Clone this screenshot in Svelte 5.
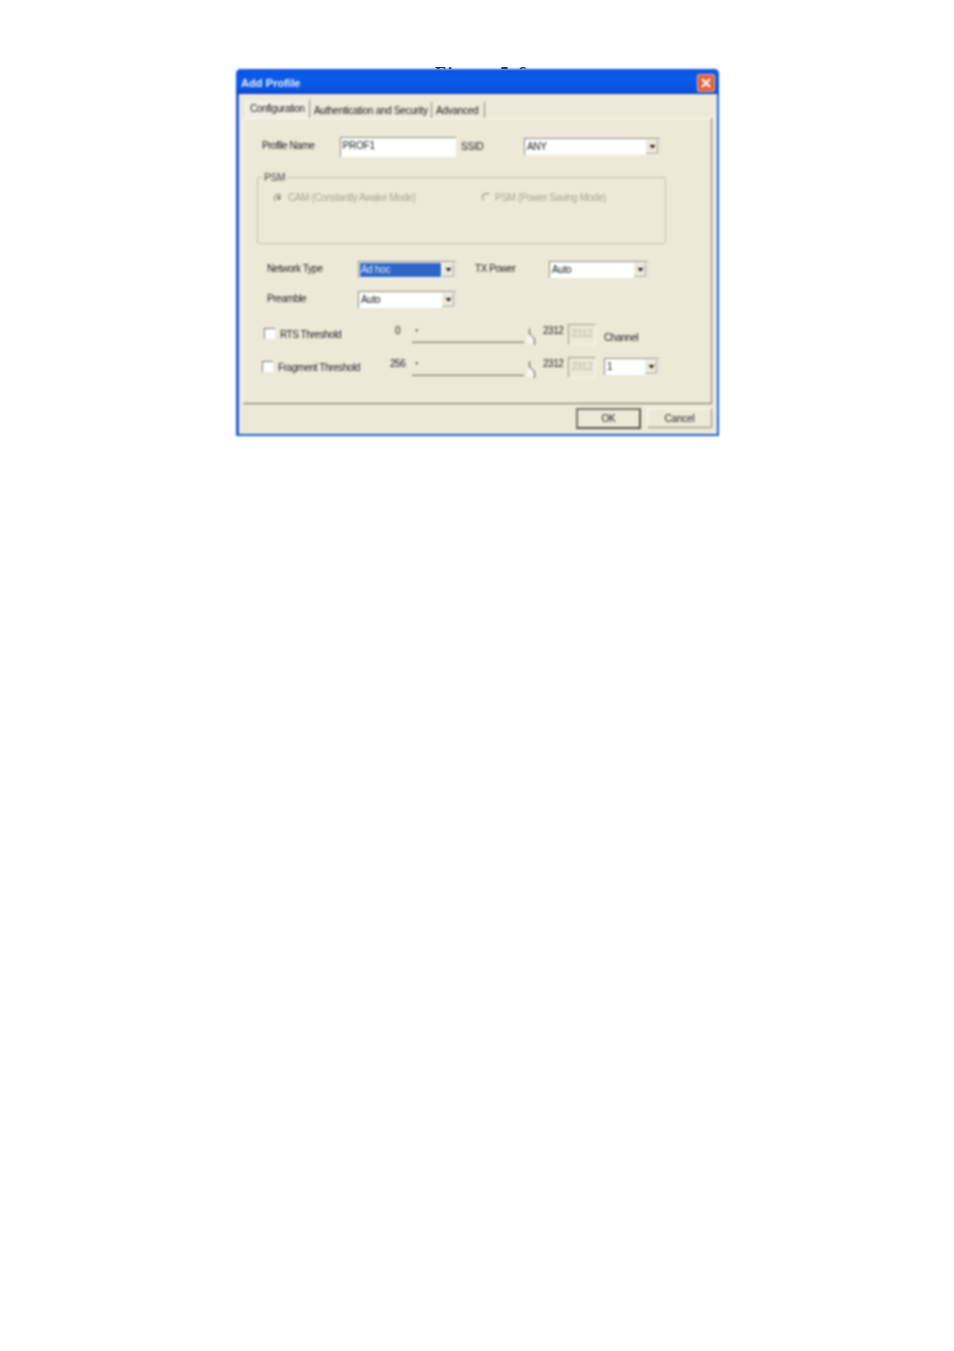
{#snippet select(text, cls, sel)}
  <div class="select {cls}">
    <span class="val" class:sel>{text}</span>
    <span class="arrow"><svg width="7" height="4" viewBox="0 0 7 4"><path d="M0.5 0H6.5L3.5 3.6Z" fill="#111"/></svg></span>
  </div>
{/snippet}

{#snippet sliderBar()}
  <svg class="slider" width="124" height="22" viewBox="0 0 124 22">
    <rect x="4" y="5" width="1.4" height="2.5" fill="#444"/>
    <path d="M0 18.5H112" stroke="#77756a" stroke-width="1.4"/>
    <path d="M0 19.6H112" stroke="#fff" stroke-width="0.8"/>
    <path d="M117.5 4.5V10L122.5 15V21" fill="none" stroke="#6a685e" stroke-width="1.2"/>
    <path d="M115 12L118 10.5L122 15V20H115Z" fill="#f7f5ec"/>
  </svg>
{/snippet}

<div class="page">
  <div class="caption"><span>Figure 5-6</span></div>
  <div class="dialog">
    <div class="title">
      <span>Add Profile</span>
      <span class="close"><svg width="12" height="12" viewBox="0 0 12 12"><path d="M2 2L10 10M10 2L2 10" stroke="#fff" stroke-width="2.2"/></svg></span>
    </div>
    <div class="body">
      <div class="tabs">
        <span class="tab active">Configuration</span>
        <span class="tab t2">Authentication and Security</span>
        <span class="tab t3">Advanced</span>
      </div>
      <div class="panel">
        <div class="row r1">
          <span class="label l1">Profile Name</span>
          <span class="input">PROF1</span>
          <span class="label ssid">SSID</span>
          {@render select('ANY', 's-ssid', false)}
        </div>
        <div class="group">
          <span class="legend">PSM</span>
          <div class="radios">
            <div class="opt o1"><span class="radio on"></span><span>CAM (Constantly Awake Mode)</span></div>
            <div class="opt o2"><span class="radio"></span><span>PSM (Power Saving Mode)</span></div>
          </div>
        </div>
        <div class="row r3">
          <span class="label l3">Network Type</span>
          {@render select('Ad hoc', 's-net', true)}
          <span class="label tx">TX Power</span>
          {@render select('Auto', 's-tx', false)}
        </div>
        <div class="row r4">
          <span class="label l3">Preamble</span>
          {@render select('Auto', 's-net', false)}
        </div>
        <div class="row r5">
          <span class="check c5"></span>
          <span class="label rts">RTS Threshold</span>
          <span class="label v0">0</span>
          {@render sliderBar()}
          <span class="label num">2312</span>
          <span class="box">2312</span>
          <span class="label chan">Channel</span>
        </div>
        <div class="row r6">
          <span class="check c6"></span>
          <span class="label frag">Fragment Threshold</span>
          <span class="label v1">256</span>
          {@render sliderBar()}
          <span class="label num">2312</span>
          <span class="box">2312</span>
          {@render select('1', 's-chan', false)}
        </div>
      </div>
      <div class="footer">
        <span class="btn ok">OK</span>
        <span class="btn">Cancel</span>
      </div>
    </div>
  </div>
</div>

<style>
  :global(body) { margin: 0; background: #fff; }
  .page { width: 954px; height: 1351px; overflow: hidden; font-family: "Liberation Sans", Arial, sans-serif; font-size: 10px; color: #222; }
  .caption { height: 69px; overflow: hidden; display: flex; justify-content: flex-start; align-items: flex-start; padding-left: 435px; box-sizing: border-box; }
  .caption span { margin-top: 65px; font: bold 18px/18px "Liberation Serif", serif; color: #333; letter-spacing: 1.4px; white-space: nowrap; }
  .dialog { margin-left: 236px; width: 483px; height: 367px; box-sizing: border-box; background: #1e5fe0; border-radius: 5px 5px 0 0; display: flex; flex-direction: column; filter: blur(0.85px); }
  .title { height: 25px; flex: none; display: flex; align-items: center; justify-content: space-between; padding: 3px 4px 0 5px; box-sizing: border-box; background: linear-gradient(#0a55e0, #0a5cec 40%, #0c50d8 90%, #0a3cc0); color: #eef3fc; font-weight: bold; font-size: 11px; letter-spacing: 0.08px; border-radius: 5px 5px 0 0; }
  .close { width: 18px; height: 18px; border-radius: 3px; background: #e0603c; display: flex; align-items: center; justify-content: center; box-shadow: inset 0 0 0 1px #f0b8a0; }
  .body { flex: 1; margin: 0 2px 2px 3px; background: #ece9d8; padding: 6px 0 0 4px; position: relative; }
  .tabs { height: 18px; display: flex; align-items: flex-end; padding-left: 2px; }
  .tab { height: 18px; display: flex; align-items: center; box-sizing: border-box; font-size: 10px; letter-spacing: -0.38px; white-space: nowrap; }
  .active { width: 65px; padding: 0 0 2px 5px; border-right: 1px solid #8c8a7e; background: #f0eee2; }
  .t2 { width: 122px; padding-left: 4px; border-right: 1px solid #8c8a7e; height: 16px; letter-spacing: -0.3px; }
  .t3 { width: 53px; padding-left: 4px; border-right: 1px solid #8c8a7e; height: 16px; letter-spacing: -0.28px; }
  .panel { width: 469px; height: 286px; box-sizing: border-box; border-top: 1px solid #faf9f2; border-left: 1px solid #f8f7ee; border-right: 1.5px solid #7d7b70; border-bottom: 1.5px solid #6a685e; margin-left: 0; }
  .row { display: flex; align-items: flex-start; white-space: nowrap; margin-left: -1px; }
  .label { display: block; line-height: 12px; letter-spacing: -0.45px; flex: none; }
  .r1 { margin-top: 18px; height: 21px; }
  .l1 { margin: 3px 0 0 19px; width: 78px; }
  .input { width: 116px; height: 20px; box-sizing: border-box; background: #fff; border-top: 1.5px solid #8c8a7e; border-left: 1.5px solid #8c8a7e; padding: 2px 0 0 1.5px; line-height: 12px; letter-spacing: -0.2px; }
  .ssid { margin: 4px 0 0 5px; width: 63px; letter-spacing: -0.2px; }
  .select { height: 17px; flex: none; box-sizing: border-box; background: #fff; border-top: 1.5px solid #8c8a7e; border-left: 1.5px solid #8c8a7e; border-right: 1px solid #d8d5c4; display: flex; justify-content: space-between; padding: 1px; }
  .val { line-height: 12px; padding: 1px 0 0 1px; flex: 1; letter-spacing: -0.3px; }
  .val.sel { background: #2f66c4; color: #e4ecfa; margin-right: 1px; }
  .arrow { width: 12px; flex: none; background: #ece9d8; box-shadow: inset -1px -1px 0 #a09e92; display: flex; align-items: center; justify-content: center; }
  .s-ssid { width: 136px; margin-top: 1px; }
  .s-net { width: 98px; }
  .s-tx { width: 99px; }
  .s-chan { width: 55px; margin: 1px 0 0 8px; }
  .group { position: relative; box-sizing: border-box; margin: 19px 0 0 13px; width: 409px; height: 67px; border: 1px solid #c4c1b0; border-radius: 2px; }
  .legend { position: absolute; left: 4px; top: -6px; background: #ece9d8; padding: 0 2px; line-height: 12px; color: #444; letter-spacing: -0.2px; }
  .radios { display: flex; padding: 14px 0 0 16px; color: #a8a699; letter-spacing: -0.42px; }
  .opt { display: flex; align-items: center; gap: 5px; line-height: 12px; }
  .o1 { width: 208px; }
  .o2 { margin-top: -1px; gap: 4px; }
  .radio { width: 9px; height: 9px; border-radius: 50%; box-sizing: border-box; border: 1.5px solid; border-color: #8c8a7e #f4f2ea #f4f2ea #8c8a7e; position: relative; }
  .radio.on::after { content: ""; position: absolute; inset: 1.5px; border-radius: 50%; background: #8c8a7e; }
  .r3 { margin-top: 17px; height: 17px; }
  .r4 { margin-top: 13px; height: 17px; }
  .l3 { margin: 2px 0 0 24px; width: 91px; }
  .tx { margin: 2px 0 0 19px; width: 74px; }
  .r5 { margin-top: 16px; height: 22px; }
  .r6 { margin-top: 11px; height: 22px; }
  .check { width: 11px; height: 11px; flex: none; box-sizing: border-box; background: #fff; border-top: 1.5px solid #7d7b70; border-left: 1.5px solid #7d7b70; }
  .c5 { margin: 4px 0 0 21px; }
  .c6 { margin: 4px 0 0 19px; }
  .rts { margin: 5px 0 0 5px; width: 115px; }
  .frag { margin: 5px 0 0 5px; width: 112px; }
  .v0 { width: 17px; margin-top: 1px; }
  .v1 { width: 22px; margin-top: 1px; }
  .slider { flex: none; display: block; }
  .num { margin: 1px 0 0 7px; width: 25px; }
  .box { width: 28px; height: 21px; box-sizing: border-box; border-top: 1.5px solid #999789; border-left: 1.5px solid #999789; border-right: 1px solid #f6f5ec; border-bottom: 1px solid #f6f5ec; color: #b8b6a8; line-height: 17px; text-align: center; letter-spacing: -0.3px; flex: none; }
  .chan { margin: 8px 0 0 8px; }
  .footer { display: flex; padding-top: 4px; gap: 6px; margin-left: 333px; }
  .btn { width: 65px; height: 20px; box-sizing: border-box; display: flex; align-items: center; justify-content: center; background: #ece9d8; border: 1px solid; border-color: #fbfaf3 #8c8a7e #8c8a7e #fbfaf3; letter-spacing: -0.2px; }
  .ok { height: 21px; border: 2px solid #55544c; border-top-color: #77756a; border-left-color: #77756a; }
</style>
